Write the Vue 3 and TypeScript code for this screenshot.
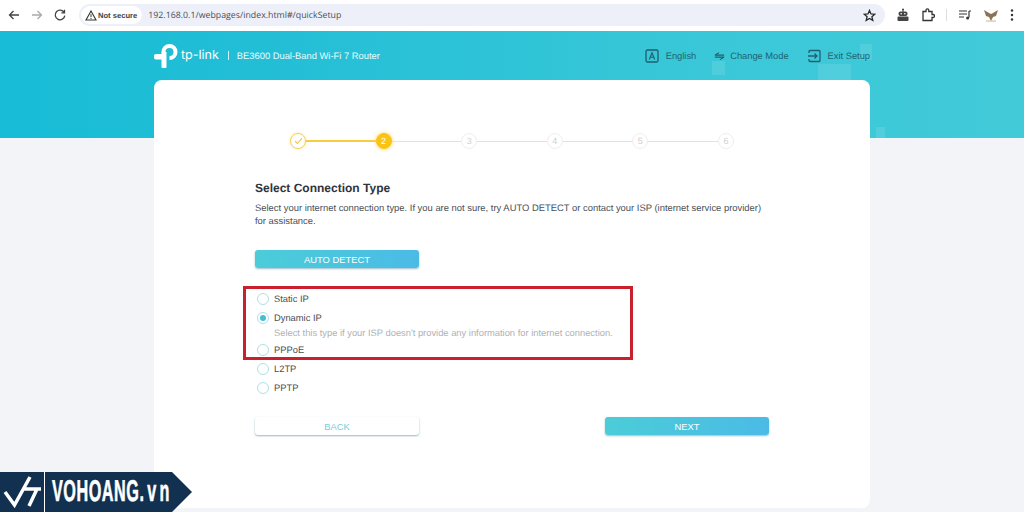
<script setup lang="ts">
const steps = [1, 2, 3, 4, 5, 6]

const connectionTypes = [
  { name: 'Static IP', note: '' },
  { name: 'Dynamic IP', note: "Select this type if your ISP doesn't provide any information for internet connection." },
  { name: 'PPPoE', note: '' },
  { name: 'L2TP', note: '' },
  { name: 'PPTP', note: '' },
]
const selected = 'Dynamic IP'
</script>

<template>
  <div class="page">
    <!-- browser toolbar -->
    <div class="toolbar">
      <div class="nav">
        <svg width="14" height="14" viewBox="0 0 14 14" class="nav-icon"><path d="M12 7H2.500M6.500 3 2.500 7l4 4" /></svg>
        <svg width="14" height="14" viewBox="0 0 14 14" class="nav-icon off"><path d="M2 7h9.500M7.500 3l4 4-4 4" /></svg>
        <svg width="14" height="14" viewBox="0 0 14 14" class="nav-icon"><path d="M11.200 4.600A4.800 4.800 0 1 0 11.800 7.600M11.500 1.800v3.100H8.400" /></svg>
      </div>
      <div class="omnibox">
        <div class="secure">
          <svg width="12" height="11" viewBox="0 0 12 11"><path d="M6 1 11 10H1Z" fill="none" stroke="#333" stroke-width="1.100" /><path d="M6 4.200v3M6 8v.9" stroke="#333" stroke-width="1" /></svg>
          <span>Not secure</span>
        </div>
        <span class="url">192.168.0.1/webpages/index.html#/quickSetup</span>
        <svg class="star" width="13" height="13" viewBox="0 0 13 13"><path d="M6.500 1.400 8 4.900l3.800.3-2.900 2.500.9 3.700-3.300-2-3.300 2 .9-3.700L1.200 5.200 5 4.900Z" fill="none" stroke="#2a2a2a" stroke-width="1.300" /></svg>
      </div>
      <div class="extensions">
        <svg width="14" height="14" viewBox="0 0 14 14"><path d="M7 1v3" stroke="#444" /><circle cx="7" cy="1.500" r="1" fill="#444" /><rect x="2.500" y="3.500" width="9" height="4.500" rx="2" fill="#444" /><circle cx="5.200" cy="5.700" r=".8" fill="#fff" /><circle cx="8.800" cy="5.700" r=".8" fill="#fff" /><rect x="1.500" y="8.500" width="11" height="4.500" rx="1" fill="#444" /></svg>
        <svg width="14" height="14" viewBox="0 0 14 14"><path d="M2 3.500h3V2.200a1.400 1.400 0 0 1 2.800 0v1.300H11v3h1a1.500 1.500 0 0 1 0 3h-1v3H2Z" fill="none" stroke="#333" stroke-width="1.300" /></svg>
        <span class="ext-sep"></span>
        <svg width="14" height="14" viewBox="0 0 14 14"><path d="M1 3h8M1 6h8M1 9h5" stroke="#333" stroke-width="1.200" /><path d="M11 3v6.500" stroke="#333" stroke-width="1.200" /><circle cx="9.600" cy="10" r="1.500" fill="#333" /><path d="M11 3h2" stroke="#333" stroke-width="1.200" /></svg>
        <svg width="16" height="14" viewBox="0 0 16 14"><path d="M1 2 6 5l2 1 2-1 5-3-2 6-3 1-2 4-2-4-3-1Z" fill="#8b7355" /><path d="M3 13h10" stroke="#c9b48a" /></svg>
        <svg width="4" height="14" viewBox="0 0 4 14"><circle cx="2" cy="2.500" r="1.200" fill="#333" /><circle cx="2" cy="7" r="1.200" fill="#333" /><circle cx="2" cy="11.500" r="1.200" fill="#333" /></svg>
      </div>
    </div>

    <main class="content">
      <span class="tile tile-a"></span>
      <span class="tile tile-b"></span>
      <span class="tile tile-c"></span>
      <span class="tile tile-d"></span>

      <header class="site-header">
        <div class="brand">
          <svg width="24" height="24" viewBox="0 0 24 24">
            <path d="M7.500 8A8 8 0 1 1 15.500 16V12A4 4 0 1 0 11.500 8L12.500 8V23A1 1 0 0 1 11.500 24H8.500A1 1 0 0 1 7.500 23V15.500H2.500A2.750 2.750 0 0 1 2.500 10H7.500Z" fill="#fff" />
          </svg>
          <span class="brand-name">tp-link</span>
          <span class="brand-sep"></span>
          <span class="model">BE3600 Dual-Band Wi-Fi 7 Router</span>
        </div>
        <nav class="actions">
          <a class="action">
            <svg width="14" height="14" viewBox="0 0 14 14"><rect x="1" y="1" width="12" height="12" rx="1.500" fill="none" stroke="#1f5f6e" stroke-width="1.300" /><path d="M4.300 10.500 7 3.700l2.700 6.800M5.300 8.300h3.400" fill="none" stroke="#1f5f6e" stroke-width="1.100" /></svg>
            <span>English</span>
          </a>
          <a class="action tight">
            <svg width="11" height="12" viewBox="0 0 13 13"><path d="M1 5.500h11M6 2.500 1 5.500M12 7.800H1M12 7.800 7 10.800" fill="none" stroke="#1f5f6e" stroke-width="1.300" /></svg>
            <span>Change Mode</span>
          </a>
          <a class="action">
            <svg width="14" height="14" viewBox="0 0 14 14"><path d="M2 4V2.500a1 1 0 0 1 1-1h9a1 1 0 0 1 1 1v9a1 1 0 0 1-1 1H3a1 1 0 0 1-1-1V10M1 7h9M7.500 4.500 10 7l-2.500 2.500" fill="none" stroke="#1f5f6e" stroke-width="1.300" /></svg>
            <span>Exit Setup</span>
          </a>
        </nav>
      </header>

      <section class="card">
        <ol class="stepper">
          <template v-for="step in steps" :key="step">
            <li class="step" :class="{ done: step === 1, current: step === 2 }">
              <svg v-if="step === 1" width="9" height="8" viewBox="0 0 9 8"><path d="M1 4.200 3.300 6.500 8 1.200" fill="none" stroke="#f0c64a" stroke-width="1.100" /></svg>
              <template v-else>{{ step }}</template>
            </li>
            <li v-if="step < 6" class="link" :class="{ active: step === 1 }"></li>
          </template>
        </ol>

        <h1 class="title">Select Connection Type</h1>
        <p class="desc">Select your internet connection type. If you are not sure, try AUTO DETECT or contact your ISP (internet service provider) for assistance.</p>

        <button class="btn primary detect">AUTO DETECT</button>

        <div class="options">
          <span class="highlight"></span>
          <div v-for="item in connectionTypes" :key="item.name" class="option">
            <label class="option-row">
              <span class="radio" :class="{ on: item.name === selected }"></span>
              <span>{{ item.name }}</span>
            </label>
            <p v-if="item.note" class="note">{{ item.note }}</p>
          </div>
        </div>

        <div class="footer-btns">
          <button class="btn ghost">BACK</button>
          <button class="btn primary">NEXT</button>
        </div>
      </section>
    </main>

    <!-- site watermark -->
    <div class="badge">
      <svg class="badge-logo" width="44" height="40" viewBox="0 0 44 40">
        <path d="M5 20 14.500 33 30 5M24 17H41M37 17 29 34" fill="none" stroke="#fff" stroke-width="3.500" />
      </svg>
      <span class="badge-text">VOHOANG<small>.vn</small></span>
    </div>
  </div>
</template>

<style>
html,
body {
  margin: 0;
  background: #f3f4f8;
}
</style>

<style scoped>
.page {
  position: relative;
  width: 1024px;
  height: 512px;
  overflow: hidden;
  font-family: "Liberation Sans", Arial, sans-serif;
  color: #3a3f47;
  text-rendering: geometricPrecision;
}

.toolbar {
  height: 31px;
  box-sizing: border-box;
  padding: 4px 0 5px 7px;
  display: flex;
  align-items: center;
  background: #fff;
}

.nav {
  display: flex;
  gap: 9px;
  width: 72px;
}

.nav-icon path {
  fill: none;
  stroke: #444;
  stroke-width: 1.300;
}

.nav-icon.off path {
  stroke: #aaa;
}

.omnibox {
  width: 806px;
  height: 22px;
  border-radius: 11px;
  background: #eef0f9;
  display: flex;
  align-items: center;
  padding-left: 2px;
  box-sizing: border-box;
}

.secure {
  height: 18px;
  padding: 0 5px 0 4px;
  border-radius: 9px;
  background: #fff;
  display: flex;
  align-items: center;
  gap: 1px;
  font-size: 7.600px;
  font-weight: bold;
  color: #444;
}

.url {
  margin-left: 6px;
  font-family: "Open Sans", sans-serif;
  font-size: 8.800px;
  color: #4a4d55;
}

.star {
  margin-left: auto;
  margin-right: 9px;
}

.extensions {
  flex: 1;
  display: flex;
  align-items: center;
  gap: 11px;
  padding-left: 11px;
}

.ext-sep {
  width: 1px;
  height: 12px;
  background: #ddd;
}

.content {
  position: relative;
  height: 481px;
  overflow: hidden;
  background:
    linear-gradient(90deg, #18bcd6, #22bed6 25%, #3ac8d8 70%, #42cad8) top / 100% 107px no-repeat,
    #f3f4f8;
}

.tile {
  position: absolute;
  background: rgba(255, 255, 255, 0.1);
}

.tile-a { left: 712px; top: 30px; width: 13px; height: 14px; }
.tile-b { left: 818px; top: 33px; width: 33px; height: 16px; }
.tile-c { left: 860px; top: 13px; width: 12px; height: 16px; }
.tile-d { left: 876px; top: 96px; width: 9px; height: 11px; }

.site-header {
  position: relative;
  height: 49px;
  padding: 0 154px;
  display: flex;
  align-items: center;
  justify-content: space-between;
}

.brand {
  display: flex;
  align-items: center;
}

.brand-name {
  margin-left: 3px;
  font-family: "Inter", sans-serif;
  font-size: 12.500px;
  color: #fff;
}

.brand-sep {
  width: 1px;
  height: 9px;
  margin: 0 8px 0 9px;
  background: #d7f3f7;
}

.model {
  font-size: 9.370px;
  color: #eafafc;
}

.actions {
  display: flex;
  gap: 18px;
}

.action {
  display: flex;
  align-items: center;
  gap: 7px;
  font-size: 9.300px;
  color: #1f6272;
}

.action.tight {
  gap: 5px;
}

.card {
  position: relative;
  width: 716px;
  height: 428px;
  margin: 0 auto 0 154px;
  box-sizing: border-box;
  padding: 51px 101px 0;
  border-radius: 8px;
  background: #fff;
}

.stepper {
  list-style: none;
  margin: 0;
  padding: 0 35px;
  height: 20px;
  display: flex;
  align-items: center;
}

.step {
  flex: none;
  width: 16px;
  height: 16px;
  box-sizing: border-box;
  border: 1px solid #eeeeee;
  border-radius: 50%;
  display: flex;
  align-items: center;
  justify-content: center;
  font-size: 9px;
  color: #d0d0d0;
}

.step.done {
  border: 1.500px solid #f6cf55;
  box-shadow: 0 0 3px #fbe59a;
}

.step.current {
  background: #fbc414;
  border-color: #fbc414;
  color: #fff;
  box-shadow: 0 0 4px #fbd766;
}

.link {
  flex: 1;
  height: 1px;
  background: #e2e2e2;
}

.link.active {
  height: 2px;
  background: #f8cc40;
}

.title {
  margin: 29px 0 0;
  font-size: 12px;
  line-height: 16px;
  color: #30343b;
}

.desc {
  margin: 5px 0 0;
  font-size: 9.420px;
  line-height: 13px;
  color: #4b4f57;
}

.btn {
  display: block;
  width: 164px;
  height: 18px;
  padding: 0;
  border: 0;
  border-radius: 3px;
  font-family: inherit;
  font-size: 9.400px;
}

.primary {
  background: linear-gradient(90deg, #4bcdd8, #4bbbe6);
  color: #fff;
  box-shadow: 0 1px 2px rgba(60, 130, 150, 0.5);
}

.ghost {
  background: #fff;
  color: #7ccbd8;
  box-shadow: 0 1px 2px rgba(60, 130, 150, 0.55);
}

.detect {
  margin-top: 23px;
}

.options {
  position: relative;
  margin-top: 21px;
  font-size: 9.350px;
  color: #4a4e55;
}

.highlight {
  position: absolute;
  left: -12px;
  top: -3px;
  width: 390px;
  height: 74px;
  box-sizing: border-box;
  border: 3px solid #c9202e;
}

.option-row {
  height: 19px;
  display: flex;
  align-items: center;
  gap: 5px;
}

.radio {
  width: 12px;
  height: 12px;
  margin-left: 2px;
  box-sizing: border-box;
  border: 1px solid #aee0e6;
  border-radius: 50%;
  display: flex;
  align-items: center;
  justify-content: center;
}

.radio.on::after {
  content: "";
  width: 6px;
  height: 6px;
  border-radius: 50%;
  background: #45bfd0;
}

.note {
  margin: 0 0 0 19px;
  height: 13px;
  line-height: 13px;
  font-size: 9.360px;
  color: #aeb1b6;
}

.footer-btns {
  margin-top: 20px;
  display: flex;
  justify-content: space-between;
}

.badge {
  position: absolute;
  left: 0;
  bottom: 0;
  width: 192px;
  height: 40px;
  display: flex;
  align-items: center;
  background: #12304f;
  clip-path: polygon(0 0, 172px 0, 192px 20px, 172px 40px, 0 40px);
}

.badge-logo {
  flex: none;
  width: 44px;
  border-right: 1px solid #fff;
}

.badge-text {
  margin-left: 7px;
  font-weight: bold;
  font-size: 30px;
  letter-spacing: 1px;
  white-space: nowrap;
  color: #fff;
  -webkit-text-stroke: 0.6px #fff;
  transform: scaleX(0.54);
  transform-origin: left center;
}

.badge-text small {
  font-size: 30px;
  letter-spacing: 6px;
}
</style>
